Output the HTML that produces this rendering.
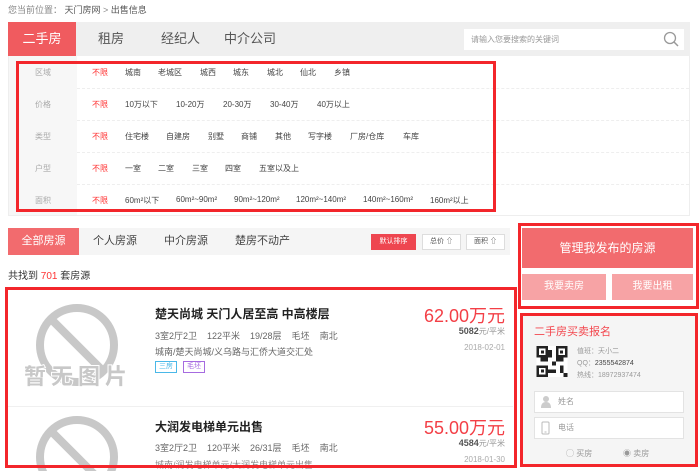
<!DOCTYPE html>
<html><head><meta charset="utf-8"><style>
*{margin:0;padding:0;box-sizing:border-box}
body{width:700px;height:471px;overflow:hidden;background:#fff;font-family:"Liberation Sans","Noto Sans CJK SC",sans-serif;color:#333;position:relative}
.a{position:absolute;white-space:nowrap}
.rb{position:absolute;border:3px solid #f3262b}
</style></head><body>
<div class="a" style="left:8px;top:3px;font-size:9px;color:#888">您当前位置： <span style="color:#555">天门房网</span> &gt; <span style="color:#555">出售信息</span></div>

<div class="a" style="left:8px;top:22px;width:682px;height:34px;background:#efefef"></div>
<div class="a" style="left:8px;top:22px;width:68px;height:34px;background:#f05b5f;color:#fff;font-size:13px;line-height:34px;text-align:center">二手房</div>
<div class="a" style="left:98px;top:22px;font-size:13px;line-height:34px;color:#555">租房</div>
<div class="a" style="left:161px;top:22px;font-size:13px;line-height:34px;color:#555">经纪人</div>
<div class="a" style="left:224px;top:22px;font-size:13px;line-height:34px;color:#555">中介公司</div>
<div class="a" style="left:464px;top:29px;width:220px;height:21px;background:#fff;font-size:8px;color:#999;line-height:21px;padding-left:7px">请输入您要搜索的关键词</div>
<svg class="a" style="left:663px;top:31px" width="18" height="17"><circle cx="7" cy="7" r="5.5" fill="none" stroke="#999" stroke-width="1.3"/><line x1="11" y1="11" x2="15" y2="15" stroke="#999" stroke-width="1.5"/></svg>

<div class="a" style="left:8px;top:56px;width:682px;height:160px;border:1px solid #eee;border-top:none"></div>
<div class="a" style="left:9px;top:56px;width:68px;height:159px;background:#f7f7f7"></div>
<div class="a" style="left:77px;top:88px;width:612px;border-top:1px dashed #eee"></div>
<div class="a" style="left:77px;top:120px;width:612px;border-top:1px dashed #eee"></div>
<div class="a" style="left:77px;top:152px;width:612px;border-top:1px dashed #eee"></div>
<div class="a" style="left:77px;top:184px;width:612px;border-top:1px dashed #eee"></div>
<div style="font-size:8px;color:#444">
<div class="a" style="left:35px;top:67px;color:#aaa">区域</div>
<div class="a" style="left:92px;top:67px;color:#f33">不限</div><div class="a" style="left:125px;top:67px">城南</div><div class="a" style="left:158px;top:67px">老城区</div><div class="a" style="left:200px;top:67px">城西</div><div class="a" style="left:233px;top:67px">城东</div><div class="a" style="left:267px;top:67px">城北</div><div class="a" style="left:300px;top:67px">仙北</div><div class="a" style="left:334px;top:67px">乡镇</div>
<div class="a" style="left:35px;top:99px;color:#aaa">价格</div>
<div class="a" style="left:92px;top:99px;color:#f33">不限</div><div class="a" style="left:125px;top:99px">10万以下</div><div class="a" style="left:176px;top:99px">10-20万</div><div class="a" style="left:223px;top:99px">20-30万</div><div class="a" style="left:270px;top:99px">30-40万</div><div class="a" style="left:317px;top:99px">40万以上</div>
<div class="a" style="left:35px;top:131px;color:#aaa">类型</div>
<div class="a" style="left:92px;top:131px;color:#f33">不限</div><div class="a" style="left:125px;top:131px">住宅楼</div><div class="a" style="left:166px;top:131px">自建房</div><div class="a" style="left:208px;top:131px">别墅</div><div class="a" style="left:241px;top:131px">商铺</div><div class="a" style="left:275px;top:131px">其他</div><div class="a" style="left:308px;top:131px">写字楼</div><div class="a" style="left:350px;top:131px">厂房/仓库</div><div class="a" style="left:403px;top:131px">车库</div>
<div class="a" style="left:35px;top:163px;color:#aaa">户型</div>
<div class="a" style="left:92px;top:163px;color:#f33">不限</div><div class="a" style="left:125px;top:163px">一室</div><div class="a" style="left:158px;top:163px">二室</div><div class="a" style="left:192px;top:163px">三室</div><div class="a" style="left:225px;top:163px">四室</div><div class="a" style="left:259px;top:163px">五室以及上</div>
<div class="a" style="left:35px;top:195px;color:#aaa">面积</div>
<div class="a" style="left:92px;top:195px;color:#f33">不限</div><div class="a" style="left:125px;top:195px">60m²以下</div><div class="a" style="left:176px;top:195px">60m²~90m²</div><div class="a" style="left:234px;top:195px">90m²~120m²</div><div class="a" style="left:296px;top:195px">120m²~140m²</div><div class="a" style="left:363px;top:195px">140m²~160m²</div><div class="a" style="left:430px;top:195px">160m²以上</div>
</div>
<div class="rb" style="left:16px;top:61px;width:480px;height:151px"></div>

<div class="a" style="left:8px;top:228px;width:502px;height:27px;background:#f5f5f5"></div>
<div class="a" style="left:8px;top:228px;width:71px;height:27px;background:#f26b6e;color:#fff;font-size:11px;line-height:27px;text-align:center">全部房源</div>
<div class="a" style="left:93px;top:228px;font-size:11px;line-height:27px;color:#444">个人房源</div>
<div class="a" style="left:164px;top:228px;font-size:11px;line-height:27px;color:#444">中介房源</div>
<div class="a" style="left:235px;top:228px;font-size:11px;line-height:27px;color:#444">楚房不动产</div>
<div class="a" style="left:371px;top:234px;width:45px;height:16px;background:#ee4650;color:#fff;font-size:7px;line-height:16px;text-align:center">默认排序</div>
<div class="a" style="left:422px;top:234px;width:39px;height:16px;border:1px solid #ddd;background:#fff;color:#555;font-size:7px;line-height:14px;text-align:center">总价 ⇧</div>
<div class="a" style="left:466px;top:234px;width:39px;height:16px;border:1px solid #ddd;background:#fff;color:#555;font-size:7px;line-height:14px;text-align:center">面积 ⇧</div>
<div class="a" style="left:8px;top:267px;font-size:10px;color:#333">共找到 <span style="color:#f33">701</span> 套房源</div>

<svg class="a" style="left:20px;top:300px" width="125" height="171">
<g fill="none" stroke="#c8c8c8" stroke-width="8"><circle cx="57" cy="45" r="37"/><line x1="32" y1="20" x2="82" y2="70"/><circle cx="57" cy="157" r="37"/><line x1="32" y1="132" x2="82" y2="182"/></g>
<text x="4" y="84" font-size="22" fill="#c8c8c8" font-family="Noto Sans CJK SC" font-weight="bold" stroke="#fff" stroke-width="2" paint-order="stroke">暂 无 图 片</text>
</svg>
<div class="a" style="left:8px;top:406px;width:505px;border-top:1px solid #f0f0f0"></div>
<div class="a" style="left:155px;top:305px;font-size:12px;font-weight:bold;color:#222">楚天尚城 天门人居至高 中高楼层</div>
<div class="a" style="left:155px;top:329px;font-size:9px;color:#666">3室2厅2卫 &nbsp;&nbsp; 122平米 &nbsp;&nbsp; 19/28层 &nbsp;&nbsp; 毛坯 &nbsp;&nbsp; 南北</div>
<div class="a" style="left:155px;top:345px;font-size:9px;color:#666">城南/楚天尚城/义乌路与汇侨大道交汇处</div>
<div class="a" style="left:155px;top:361px;font-size:7px;color:#4ab8e8;border:1px solid #4ab8e8;padding:0 3px;line-height:10px">三房</div>
<div class="a" style="left:183px;top:361px;font-size:7px;color:#a66be0;border:1px solid #a66be0;padding:0 3px;line-height:10px">毛坯</div>
<div class="a" style="right:195px;top:302px;font-size:18px;color:#f33f46">62.00万元</div>
<div class="a" style="right:195px;top:326px;font-size:8px;color:#999"><b style="color:#555;font-size:9px">5082</b>元/平米</div>
<div class="a" style="right:195px;top:343px;font-size:8px;color:#aaa">2018-02-01</div>

<div class="a" style="left:155px;top:418px;font-size:12px;font-weight:bold;color:#222">大润发电梯单元出售</div>
<div class="a" style="left:155px;top:441px;font-size:9px;color:#666">3室2厅2卫 &nbsp;&nbsp; 120平米 &nbsp;&nbsp; 26/31层 &nbsp;&nbsp; 毛坯 &nbsp;&nbsp; 南北</div>
<div class="a" style="left:155px;top:458px;font-size:9px;color:#888">城南/润发电梯单元/大润发电梯单元出售</div>
<div class="a" style="right:195px;top:414px;font-size:18px;color:#f33f46">55.00万元</div>
<div class="a" style="right:195px;top:438px;font-size:8px;color:#999"><b style="color:#555;font-size:9px">4584</b>元/平米</div>
<div class="a" style="right:195px;top:455px;font-size:8px;color:#aaa">2018-01-30</div>
<div class="rb" style="left:5px;top:287px;width:512px;height:181px"></div>

<div class="a" style="left:522px;top:228px;width:171px;height:40px;background:#f26b6e;color:#fff;font-size:12px;line-height:40px;text-align:center">管理我发布的房源</div>
<div class="a" style="left:522px;top:274px;width:84px;height:26px;background:#f7a3a5;color:#fff;font-size:10px;line-height:26px;text-align:center">我要卖房</div>
<div class="a" style="left:612px;top:274px;width:81px;height:26px;background:#f7a3a5;color:#fff;font-size:10px;line-height:26px;text-align:center">我要出租</div>
<div class="rb" style="left:518px;top:223px;width:181px;height:86px"></div>

<div class="a" style="left:522px;top:315px;width:174px;height:151px;background:#f5f5f5"></div>
<div class="a" style="left:534px;top:323px;font-size:11px;color:#f3474e">二手房买卖报名</div>
<svg class="a" style="left:536px;top:346px" width="32" height="31" viewBox="0 0 8 8" shape-rendering="crispEdges"><rect width="8" height="8" fill="#fff"/><g fill="#222"><rect x="0" y="0" width="3" height="3"/><rect x="5" y="0" width="3" height="3"/><rect x="0" y="5" width="3" height="3"/><rect x="4" y="4" width="1" height="1"/><rect x="6" y="5" width="1" height="2"/><rect x="3" y="1" width="1" height="2"/><rect x="1" y="3" width="2" height="1"/><rect x="5" y="3" width="2" height="1"/><rect x="3" y="6" width="2" height="1"/><rect x="7" y="7" width="1" height="1"/></g><g fill="#fff"><rect x=".7" y=".7" width="1.6" height="1.6"/><rect x="5.7" y=".7" width="1.6" height="1.6"/><rect x=".7" y="5.7" width="1.6" height="1.6"/></g><g fill="#222"><rect x="1.1" y="1.1" width=".8" height=".8"/><rect x="6.1" y="1.1" width=".8" height=".8"/><rect x="1.1" y="6.1" width=".8" height=".8"/></g></svg>
<div class="a" style="left:577px;top:346px;font-size:7px;color:#999">值班：天小二</div>
<div class="a" style="left:577px;top:358px;font-size:7px;color:#999">QQ：<span style="color:#444">2355542874</span></div>
<div class="a" style="left:577px;top:370px;font-size:7px;color:#999">热线：18972937474</div>
<div class="a" style="left:534px;top:391px;width:150px;height:22px;background:#fff;border:1px solid #e3e3e3;font-size:8px;color:#999;line-height:20px;padding-left:23px">姓名</div>
<svg class="a" style="left:540px;top:395px" width="12" height="13"><circle cx="6" cy="4" r="3" fill="#ccc"/><path d="M1 13 Q1 7 6 7 Q11 7 11 13Z" fill="#ccc"/></svg>
<div class="a" style="left:534px;top:417px;width:150px;height:22px;background:#fff;border:1px solid #e3e3e3;font-size:8px;color:#999;line-height:20px;padding-left:23px">电话</div>
<svg class="a" style="left:541px;top:421px" width="9" height="14"><rect x="1" y="1" width="7" height="12" rx="1" fill="none" stroke="#bbb"/><line x1="3.5" y1="11" x2="5.5" y2="11" stroke="#bbb"/></svg>
<div class="a" style="left:566px;top:448px;font-size:8px;color:#999">◯ 买房</div>
<div class="a" style="left:623px;top:448px;font-size:8px;color:#999">◉ 卖房</div>
<div class="rb" style="left:520px;top:313px;width:178px;height:154px"></div>
</body></html>
